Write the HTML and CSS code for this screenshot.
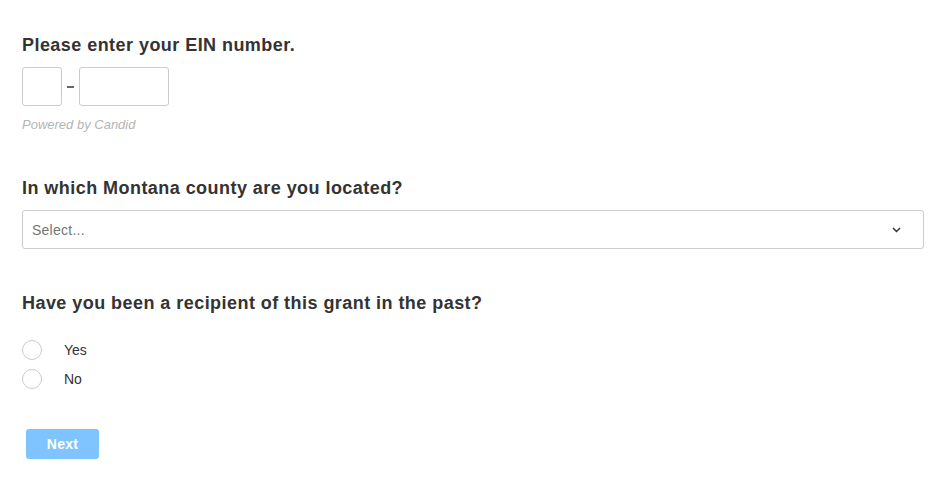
FILE: index.html
```html
<!DOCTYPE html>
<html>
<head>
<meta charset="utf-8">
<link rel="stylesheet" href="styles.css">
</head>
<body>
<form class="form">
  <section class="field field-ein">
    <h2 class="label">Please enter your EIN number.</h2>
    <div class="ein-row">
      <input class="box box-short" type="text">
      <span class="dash"></span>
      <input class="box box-long" type="text">
    </div>
    <div class="powered">Powered by Candid</div>
  </section>
  <section class="field field-county">
    <h2 class="label">In which Montana county are you located?</h2>
    <div class="select">
      <span class="placeholder">Select...</span>
      <svg class="chevron" width="9" height="6" viewBox="0 0 9 6"><path d="M1 1 L4.5 4.5 L8 1" fill="none" stroke="#333" stroke-width="1.5"/></svg>
    </div>
  </section>
  <section class="field field-radio">
    <h2 class="label">Have you been a recipient of this grant in the past?</h2>
    <div class="radios">
      <label class="radio"><span class="circle"></span><span class="rlabel">Yes</span></label>
      <label class="radio"><span class="circle"></span><span class="rlabel">No</span></label>
    </div>
  </section>
  <div class="actions"><button type="button" class="next">Next</button></div>
</form>
</body>
</html>
```
FILE: styles.css
```css
html, body { margin: 0; padding: 0; background: #fff; }
body { font-family: "Liberation Sans", Arial, sans-serif; color: #333; }
.form { padding: 35px 19px 0 22px; display: flex; flex-direction: column; }
.label { margin: 0; font-size: 18px; font-weight: bold; color: #333; line-height: 21px; letter-spacing: 0.45px; }
.ein-row { margin-top: 11px; display: flex; align-items: center; }
.box { box-sizing: border-box; height: 39px; border: 1px solid #ccc; border-radius: 3px; margin: 0; padding: 0; background: #fff; }
.box-short { width: 40px; }
.box-long { width: 90px; }
.dash { width: 7px; height: 2px; background: #666; margin: 0 5px 0 5px; }
.powered { margin-top: 12px; font-size: 13px; font-style: italic; color: #b5b5b5; line-height: 14px; }
.field-county { margin-top: 46px; }
.select { margin-top: 11px; box-sizing: border-box; height: 39px; border: 1px solid #ccc; border-radius: 3px; display: flex; align-items: center; justify-content: space-between; padding: 0 22px 0 9px; }
.placeholder { font-size: 14px; color: #757575; letter-spacing: 0.25px; }
.chevron { display: block; margin-top: 1px; }
.field-radio { margin-top: 44px; }
.radios { margin-top: 26px; display: flex; flex-direction: column; gap: 9px; }
.radio { display: flex; align-items: center; height: 20px; }
.circle { box-sizing: border-box; width: 20px; height: 20px; border: 1px solid #ccc; border-radius: 50%; background: #fff; }
.rlabel { margin-left: 22px; font-size: 14px; color: #333; }
.actions { margin-top: 40px; padding-left: 4px; }
.next { width: 73px; height: 30px; border: none; border-radius: 3px; background: #80c4ff; color: #fff; font-family: "Liberation Sans", Arial, sans-serif; font-weight: bold; font-size: 14px; padding: 0; letter-spacing: 0.3px; }
```
